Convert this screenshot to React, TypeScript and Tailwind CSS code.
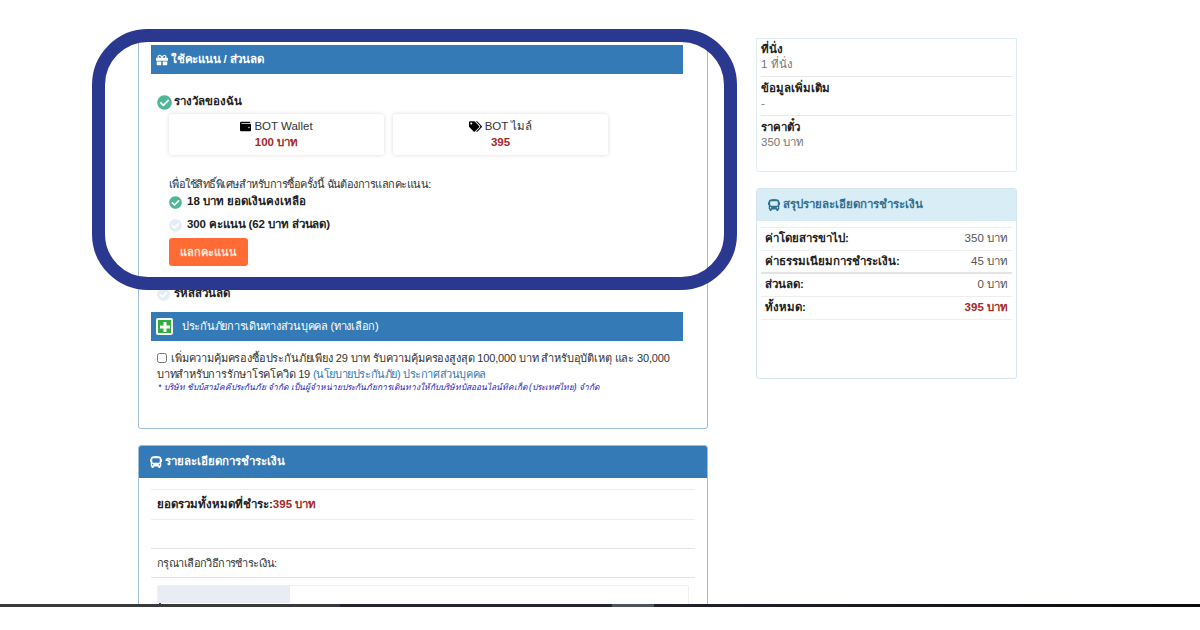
import { FaBus, FaCheckCircle, FaGift, FaTags, FaWallet } from "react-icons/fa";

function SectionBar({ children }: { children: React.ReactNode }) {
  return <div className="flex h-[29px] w-[532px] items-center bg-[#337ab7] pl-[5px] text-white">{children}</div>;
}

function RewardCard({ icon, label, value }: { icon: React.ReactNode; label: string; value: string }) {
  return (
    <div className="flex h-[41px] w-[215px] flex-col items-center rounded-[3px] bg-white pt-[5px] shadow-[0_0_4px_rgba(0,0,0,0.14)]">
      <div className="flex h-[15px] items-center gap-[3px] text-[11.5px] text-[#333]">
        {icon}
        <span>{label}</span>
      </div>
      <div className="h-[16px] text-[11.5px] leading-[16px] font-bold text-[#a52a2a]">{value}</div>
    </div>
  );
}

function SummaryRow({ label, value, total, thick }: { label: string; value: string; total?: boolean; thick?: boolean }) {
  return (
    <div className={`flex h-[23px] items-center justify-between px-[4px] ${thick ? "border-b-2 border-[#e4e4e4]" : "border-b border-[#eeeeee]"}`}>
      <span className="font-bold text-[#222]">{label}</span>
      <span className={total ? "font-bold text-[#a52a2a]" : "text-[#555]"}>{value}</span>
    </div>
  );
}

export default function App() {
  return (
    <div className="relative h-[630px] w-[1200px] overflow-hidden bg-white font-['Liberation_Sans','Noto_Sans',sans-serif] text-[11.5px] text-[#333]">
      <div className="flex h-[604px] overflow-hidden pt-[35px] pl-[138px]">
        {/* left column */}
        <div className="w-[570px] shrink-0">
          <div className="h-[394px] rounded-[3px] border border-[#9dbdd8] pt-[9px] pl-[12px]">
            <SectionBar>
              <FaGift className="mr-[3px] text-[12px]" />
              <span className="font-bold tracking-[-0.2px]">ใช้คะแนน / ส่วนลด</span>
            </SectionBar>

            <div className="mt-[20px] flex h-[16px] items-center gap-[2px] pl-[6px]">
              <FaCheckCircle className="text-[15px] text-[#4db894]" />
              <span className="font-bold text-[#222]">รางวัลของฉัน</span>
            </div>
            <div className="mt-[4px] ml-[18px] flex gap-[9px]">
              <RewardCard icon={<FaWallet className="text-[11px] text-black" />} label="BOT Wallet" value="100 บาท" />
              <RewardCard icon={<FaTags className="text-[13px] text-black" />} label="BOT ไมล์" value="395" />
            </div>

            <div className="mt-[21px] ml-[18px] h-[16px] text-[11px] leading-[16px] tracking-[-0.52px]">เพื่อใช้สิทธิ์พิเศษสำหรับการซื้อครั้งนี้ ฉันต้องการแลกคะแนน:</div>
            <div className="mt-[2px] ml-[18px] flex h-[16px] items-center gap-[5px]">
              <FaCheckCircle className="text-[13px] text-[#4db894]" />
              <span className="font-bold text-[#222]">18 บาท ยอดเงินคงเหลือ</span>
            </div>
            <div className="mt-[7px] ml-[18px] flex h-[16px] items-center gap-[5px]">
              <FaCheckCircle className="text-[13px] text-[#e4edf5]" />
              <span className="font-bold tracking-[-0.1px] text-[#222]">300 คะแนน (62 บาท ส่วนลด)</span>
            </div>
            <button className="mt-[5px] ml-[18px] flex h-[28px] w-[79px] items-center justify-center rounded-[3px] bg-[#ff6b35] text-[11px] font-bold text-[#ffe6d8]">
              แลกคะแนน
            </button>

            <div className="mt-[20px] flex h-[16px] items-center gap-[4px] pl-[6px]">
              <FaCheckCircle className="text-[13px] text-[#e4edf5]" />
              <span className="font-bold text-[#222]">รหัสส่วนลด</span>
            </div>

            <div className="mt-[10px]">
              <SectionBar>
                <span className="flex h-[17px] w-[17px] items-center justify-center rounded-[2px] border-2 border-white bg-[#2fae3e]">
                  <svg viewBox="0 0 12 12" className="h-[12px] w-[12px]">
                    <path d="M4.5 1h3v3.5H11v3H7.5V11h-3V7.5H1v-3h3.5z" fill="#fff" />
                  </svg>
                </span>
                <span className="ml-[9px] text-[11px] tracking-[-0.27px]">ประกันภัยการเดินทางส่วนบุคคล (ทางเลือก)</span>
              </SectionBar>
            </div>

            <div className="mt-[9px] pl-[6px] text-[11px] leading-[16px] tracking-[-0.16px] whitespace-nowrap">
              <div className="flex items-center">
                <input type="checkbox" className="mr-[4px] h-[10px] w-[10px]" />
                <span>เพิ่มความคุ้มครองซื้อประกันภัยเพียง 29 บาท รับความคุ้มครองสูงสุด 100,000 บาท สำหรับอุบัติเหตุ และ 30,000</span>
              </div>
              <div className="flex gap-[3px]">
                <span className="tracking-[-0.22px]">บาทสำหรับการรักษาโรคโควิด 19</span>
                <span className="tracking-[-0.4px] text-[#337ab7]">(นโยบายประกันภัย) ประกาศส่วนบุคคล</span>
              </div>
            </div>
            <div className="pl-[7px] text-[8.4px] leading-[11px] text-[#2222bb] italic">
              * บริษัท ชับบ์สามัคคีประกันภัย จำกัด เป็นผู้จำหน่ายประกันภัยการเดินทางให้กับบริษัทบัสออนไลน์ทิคเก็ต (ประเทศไทย) จำกัด
            </div>
          </div>

          <div className="mt-[16px] h-[200px] rounded-[3px] border border-[#9dbdd8]">
            <div className="flex h-[32px] items-center rounded-t-[2px] bg-[#337ab7] pl-[11px] text-white">
              <FaBus className="mr-[3px] text-[12px]" />
              <span className="font-bold">รายละเอียดการชำระเงิน</span>
            </div>
            <div className="mx-[12px] mt-[11px] flex h-[31px] items-center border-y border-[#eeeeee] pl-[6px]">
              <span className="font-bold text-[#222]">ยอดรวมทั้งหมดที่ชำระ:</span>
              <span className="font-bold text-[#a52a2a]">395 บาท</span>
            </div>
            <div className="mx-[12px] mt-[28px] flex h-[30px] items-center border-y border-[#e4e4e4] pl-[6px] text-[11px] tracking-[-0.58px]">
              กรุณาเลือกวิธีการชำระเงิน:
            </div>
            <div className="mt-[7px] ml-[18px] mr-[18px] h-[40px] rounded-[2px] border border-[#f0f0f0]">
              <div className="h-[17px] w-[132px] bg-[#e9edf3]" />
              <div className="ml-[1px] h-[3px] w-[2px] bg-[#33506b]" />
            </div>
          </div>
        </div>

        {/* right column */}
        <div className="ml-[48px] w-[261px] shrink-0">
          <div className="mt-[3px] h-[134px] rounded-b-[3px] border border-[#dfecf2] px-[4px]">
            <div className="h-[38px] border-b border-[#e8e8e8] pt-[3px] leading-[15px]">
              <div className="font-bold text-[#222]">ที่นั่ง</div>
              <div className="text-[#777]">1 ที่นั่ง</div>
            </div>
            <div className="h-[39px] border-b border-[#e8e8e8] pt-[4px] leading-[15px]">
              <div className="font-bold text-[#222]">ข้อมูลเพิ่มเติม</div>
              <div className="text-[#777]">-</div>
            </div>
            <div className="pt-[4px] leading-[15px]">
              <div className="font-bold text-[#222]">ราคาตั๋ว</div>
              <div className="text-[#777]">350 บาท</div>
            </div>
          </div>

          <div className="mt-[16px] h-[191px] rounded-[3px] border border-[#d5e6ee]">
            <div className="flex h-[32px] items-center rounded-t-[2px] bg-[#d9edf7] pl-[11px] text-[#31708f]">
              <FaBus className="mr-[3px] text-[12px]" />
              <span className="font-bold">สรุปรายละเอียดการชำระเงิน</span>
            </div>
            <div className="mx-[4px] mt-[6px] border-t border-[#eeeeee]">
              <SummaryRow label="ค่าโดยสารขาไป:" value="350 บาท" />
              <SummaryRow label="ค่าธรรมเนียมการชำระเงิน:" value="45 บาท" thick />
              <SummaryRow label="ส่วนลด:" value="0 บาท" />
              <SummaryRow label="ทั้งหมด:" value="395 บาท" total />
            </div>
          </div>
        </div>
      </div>

      {/* taskbar strip cut off at the bottom of the capture */}
      <div className="flex h-[3px] w-full">
        <div className="w-[340px] bg-[#3a3a3c]" />
        <div className="w-[272px] bg-[#25252f]" />
        <div className="w-[42px] bg-[#50525c]" />
        <div className="flex-1 bg-gradient-to-r from-[#23232b] to-[#0b0b0d]" />
      </div>

      {/* drawn highlight around the points section */}
      <div className="pointer-events-none absolute top-[29px] left-[92px] h-[261px] w-[645px] rounded-[56px] border-[13px] border-[#2a3890]" />
    </div>
  );
}
